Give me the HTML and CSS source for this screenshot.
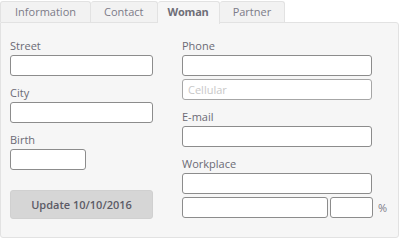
FILE: index.html
```html
<!DOCTYPE html>
<html lang="en">
<head>
    <meta charset="UTF-8">
    <meta name="viewport" content="width=device-width, initial-scale=1.0">
    <title>Woman</title>
    <link rel="stylesheet" href="styles.css">
</head>
<body>
    <div class="tabs">
        <div class="tab">Information</div>
        <div class="tab">Contact</div>
        <div class="tab active">Woman</div>
        <div class="tab">Partner</div>
    </div>

    <div class="panel">
        <div class="col left">
            <div class="field">
                <label>Street</label>
                <input type="text">
            </div>
            <div class="field">
                <label>City</label>
                <input type="text">
            </div>
            <div class="field">
                <label>Birth</label>
                <input type="text" class="short">
            </div>
            <button>Update 10/10/2016</button>
        </div>

        <div class="col right">
            <div class="field">
                <label>Phone</label>
                <input type="text">
                <input type="text" class="light" placeholder="Cellular">
            </div>
            <div class="field">
                <label>E-mail</label>
                <input type="text">
            </div>
            <div class="field">
                <label>Workplace</label>
                <input type="text">
                <div class="row">
                    <input type="text" class="wide">
                    <input type="text" class="pct">
                    <span class="unit">%</span>
                </div>
            </div>
        </div>
    </div>
</body>
</html>
```

FILE: styles.css
```css
body {
    font-family: "Open Sans", "Noto Sans", sans-serif;
    font-size: 11px;
    color: #6b6a75;
    background-color: #fff;
    margin: 0;
    padding: 0;
}

.tabs {
    display: flex;
    height: 22px;
    padding-top: 1px;
    box-sizing: border-box;
}

.tab {
    padding: 0 13px;
    line-height: 20px;
    color: #7c7b88;
    background-color: #f2f2f2;
    border: 1px solid #e2e2e2;
    border-bottom: none;
    border-left: none;
    border-radius: 3px 3px 0 0;
}

.tab:first-child {
    border-left: 1px solid #e2e2e2;
    padding: 0 14px;
}

.tab.active {
    padding: 0 10px;
    font-weight: bold;
    letter-spacing: -0.2px;
    color: #6e6e78;
    background-color: #f6f6f6;
    height: 22px;
}

.panel {
    display: flex;
    gap: 29px;
    width: 399px;
    height: 216px;
    box-sizing: border-box;
    padding: 16px 0 0 9px;
    background-color: #f6f6f6;
    border: 1px solid #e2e2e2;
    border-radius: 0 3px 3px 3px;
}

.col {
    display: flex;
    flex-direction: column;
}

.left {
    width: 143px;
}

.right {
    width: 190px;
}

.field {
    display: flex;
    flex-direction: column;
    gap: 3px;
    margin-bottom: 10px;
}

label {
    line-height: 14px;
    margin-bottom: -1px;
}

input {
    height: 21px;
    box-sizing: border-box;
    margin: 0;
    padding: 0 5px;
    font-family: inherit;
    font-size: 11px;
    background-color: #fff;
    border: 1px solid #8c8c8c;
    border-radius: 3px;
    width: 100%;
}

input.light {
    border-color: #a6a6a6;
}

input::placeholder {
    color: #c8c8c8;
}

input.short {
    width: 76px;
}

.row {
    display: flex;
    align-items: center;
    gap: 2px;
    width: 206px;
}

input.wide {
    width: 146px;
    flex: none;
}

input.pct {
    width: 43px;
    flex: none;
}

.unit {
    margin-left: 3px;
    color: #7c7b88;
}

button {
    margin-top: 10px;
    height: 29px;
    width: 143px;
    font-family: inherit;
    font-size: 11px;
    font-weight: 600;
    color: #5c5b66;
    background-color: #d6d6d6;
    border: 1px solid #d0d0d0;
    border-radius: 3px;
}
```
